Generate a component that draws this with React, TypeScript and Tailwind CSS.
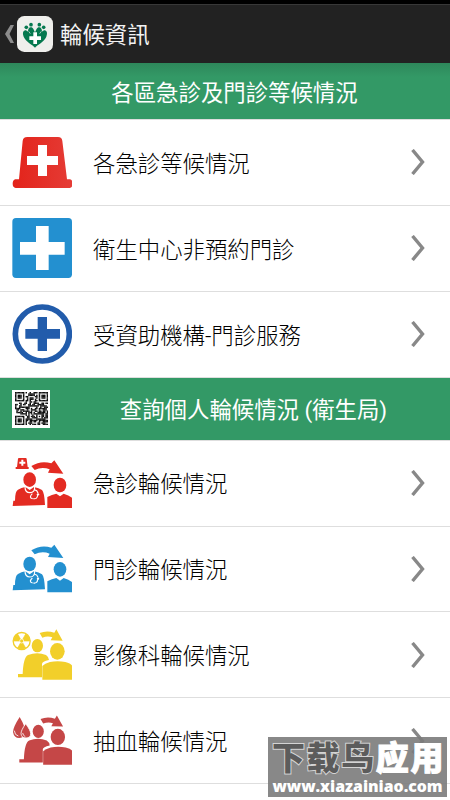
import type { ReactNode } from "react";

const RED = "#e32b22";
const BLUE = "#2390d0";
const NAVY = "#225cab";
const YELLOW = "#f2cf2a";
const CRIMSON = "#c54747";

const QR_SIZE = 25;

// Three finder squares, one alignment square, filler modules elsewhere
function isDark(x: number, y: number) {
  const finders = [
    [0, 0],
    [QR_SIZE - 7, 0],
    [0, QR_SIZE - 7],
  ];
  for (const [fx, fy] of finders) {
    const dx = x - fx;
    const dy = y - fy;
    if (dx >= -1 && dx <= 7 && dy >= -1 && dy <= 7) {
      const ring = Math.max(Math.abs(dx - 3), Math.abs(dy - 3));
      return ring !== 2 && ring !== 4;
    }
  }
  const align = Math.max(Math.abs(x - 18), Math.abs(y - 18));
  if (align <= 2) return align !== 1;
  return Math.sin(x * 1.9 + y * 0.8) + Math.sin(y * 2.3 - x * 0.7) + Math.sin(x * y * 0.6) > -0.25;
}

function QrCode() {
  const modules: ReactNode[] = [];
  for (let y = 0; y < QR_SIZE; y++) {
    for (let x = 0; x < QR_SIZE; x++) {
      if (isDark(x, y)) modules.push(<rect key={`${x}-${y}`} x={x} y={y} width="1.1" height="1.1" />);
    }
  }
  return (
    <div className="size-[38px] shrink-0 bg-white p-[2.5px]">
      <svg viewBox="0 0 25 25" className="size-[33px]" fill="#0c0c0c">
        {modules}
      </svg>
    </div>
  );
}

function AppLogo() {
  return (
    <svg viewBox="0 0 108 108" className="size-9 shrink-0">
      <rect width="108" height="108" rx="22" fill="#efefec" />
      <g fill="#06794f">
        <circle cx="28" cy="34" r="5.5" />
        <circle cx="42" cy="26" r="5.5" />
        <circle cx="67" cy="26" r="5.5" />
        <circle cx="80" cy="34" r="5.5" />
        <path d="M54 95C48 87 26 77 20 62c-4-10-2-18 5-19 3 0 5 2 8 4 0-9 4-14 9-13 6 0 9 8 12 16 3-8 6-16 12-16 5-1 9 4 9 13 3-2 5-4 8-4 7 1 9 9 5 19C82 77 60 87 54 95Z" />
      </g>
      <path d="M49 49h11v12h12v11H60v12H49V72H37V61h12Z" fill="#fff" />
      <path d="M35 46l5 7M73 46l-5 7" stroke="#efefec" strokeWidth="2" />
    </svg>
  );
}

function SirenIcon() {
  return (
    <svg viewBox="36 36 180 180" className="size-[60px]">
      <defs>
        <linearGradient id="siren">
          <stop offset="0" stopColor="#e3231a" />
          <stop offset="1" stopColor="#e53c36" />
        </linearGradient>
      </defs>
      <path d="M82 51h92q12 0 13 12l14 115h9q8 2 8 13t-9 13H47q-9-2-9-13t8-13h11l11-115q1-12 14-12Z" fill="url(#siren)" />
      <path d="M114 75h27v33h33v27h-33v33h-27v-33H81v-27h33Z" fill="#fff" />
    </svg>
  );
}

function SquareCrossIcon() {
  return (
    <svg viewBox="36 36 180 180" className="size-[60px]">
      <rect x="37" y="36" width="179" height="180" rx="11" fill={BLUE} />
      <path d="M108 60h38v48h48v38h-48v46h-38v-46H60v-38h48Z" fill="#fff" />
    </svg>
  );
}

function RoundCrossIcon() {
  return (
    <svg viewBox="36 36 180 180" className="size-[60px]">
      <circle cx="127" cy="126" r="81" fill="none" stroke={NAVY} strokeWidth="17" />
      <path d="M113 75h28v36h39v29h-39v37h-28v-37H76v-29h37Z" fill={NAVY} />
    </svg>
  );
}

function DoctorPatient({ color }: { color: string }) {
  return (
    <>
      <g fill={color}>
        <path d="M94 63Q123 45 154 55l9-9 27 40-46-3 5-10Q126 64 104 75Z" />
        <ellipse cx="89" cy="104" rx="19" ry="22" />
        <path d="M38 183l2-16h5q0-29 9-33 10-6 22-8l13 9 13-9q15 3 24 9 7 6 9 45Z" />
        <ellipse cx="180" cy="120" rx="19" ry="22" />
        <path d="M142 189v-33q14-7 27-10l11 8 11-8q16 4 26 13v30Z" />
      </g>
      {/* stethoscope */}
      <g fill="none" stroke="#fff" strokeWidth="3.5">
        <path d="M75 125q0 18 15 18t14-18M103 134q9 2 11 10" />
        <path d="M97 146q-12 12 1 15M100 161q12 2 13-11" />
      </g>
      <circle cx="114" cy="148" r="3.5" fill="#fff" />
    </>
  );
}

function EmergencyQueueIcon() {
  return (
    <svg viewBox="36 24 180 180" className="size-[60px]">
      <path d="M54 41q0-2 3-2h20q3 0 3 3l3 24h3v6H47v-6h4Z" fill={RED} />
      <path d="M64 44h6v6h6v6h-6v6h-6v-6h-6v-6h6Z" fill="#fff" />
      <DoctorPatient color={RED} />
    </svg>
  );
}

function ClinicQueueIcon() {
  return (
    <svg viewBox="36 27 180 180" className="size-[60px]">
      <g transform="translate(0 -2)">
        <DoctorPatient color={BLUE} />
      </g>
    </svg>
  );
}

function TwoPeople({ color }: { color: string }) {
  return (
    <>
      <path d="M119 54Q140 45 163 53l6-10 19 34-36-1 5-9Q143 62 127 68Z" fill={color} />
      <ellipse cx="112" cy="92" rx="17" ry="20" fill={color} />
      <path d="M54 187v-10h14q2-50 16-57 28-11 54 0 8 5 9 15-21 4-21 12v40Z" fill={color} />
      <ellipse cx="172" cy="109" rx="25" ry="28" fill="#fff" />
      <ellipse cx="172" cy="109" rx="22" ry="25" fill={color} />
      <path d="M127 194v-41q7-8 23-12 23-4 46 0 18 4 21 13v40Z" fill={color} />
    </>
  );
}

function ImagingQueueIcon() {
  return (
    <svg viewBox="36 30 180 180" className="size-[60px]">
      <TwoPeople color={YELLOW} />
      <circle cx="65" cy="78" r="29" fill="#fff" />
      <circle cx="65" cy="78" r="25.5" fill="#fff" stroke={YELLOW} strokeWidth="4" />
      {/* radiation blades */}
      <path
        d="M65 78H41A24 24 0 0 1 53 57.2ZM65 78L77 57.2A24 24 0 0 1 89 78ZM65 78L77 98.8A24 24 0 0 1 53 98.8Z"
        fill={YELLOW}
        stroke={YELLOW}
        strokeWidth="2"
      />
      <circle cx="65" cy="78" r="6" fill={YELLOW} stroke="#fff" strokeWidth="2" />
    </svg>
  );
}

function BloodQueueIcon() {
  return (
    <svg viewBox="36 33 180 180" className="size-[60px]">
      <g transform="translate(5 4) scale(0.98)">
        <TwoPeople color={CRIMSON} />
      </g>
      <path d="M59 51q17 29 16 43-1 20-17 20T39 96q0-14 20-45Z" fill={CRIMSON} />
      <path d="M77 71q15 20 15 30 0 13-14 13T63 101q0-10 14-30Z" fill={CRIMSON} stroke="#fff" strokeWidth="2.5" />
      <path d="M43 92q1 14 12 16M68 99q1 8 8 11" fill="none" stroke="#fff" strokeWidth="2.5" />
    </svg>
  );
}

const waitingItems = [
  { label: "各急診等候情況", icon: <SirenIcon /> },
  { label: "衛生中心非預約門診", icon: <SquareCrossIcon /> },
  { label: "受資助機構-門診服務", icon: <RoundCrossIcon /> },
];

const personalItems = [
  { label: "急診輪候情況", icon: <EmergencyQueueIcon /> },
  { label: "門診輪候情況", icon: <ClinicQueueIcon /> },
  { label: "影像科輪候情況", icon: <ImagingQueueIcon /> },
  { label: "抽血輪候情況", icon: <BloodQueueIcon /> },
];

function Row({ label, icon }: { label: string; icon: ReactNode }) {
  return (
    <li className="flex h-[85.9px] items-center border-b border-[#dedede] pl-3 pr-[25px]">
      {icon}
      <span className="ml-[21px] flex-1 pt-[3px] text-[22.4px] font-light leading-none text-black">{label}</span>
      <svg viewBox="0 0 14 26" className="h-[26px] w-3.5" fill="none" stroke="#888" strokeWidth="3.4">
        <path d="M1.5 1l10 12-10 12" />
      </svg>
    </li>
  );
}

function Watermark() {
  return (
    <div className="absolute left-[268px] top-[737px] flex h-[60px] w-[179px] flex-col items-center overflow-hidden bg-[#7b7b7b]/90 text-white">
      <div className="mt-1.5 flex pl-0.5 text-[33px] font-black leading-[32px] tracking-[1.6px]">
        <span className="text-[#5c5c5c] [-webkit-text-stroke:2px_#d4d4d4] [paint-order:stroke_fill]">下载鸟</span>
        <span className="[-webkit-text-stroke:1px_#fff]">应用</span>
      </div>
      <span className="mt-0.5 font-['Open_Sans',sans-serif] text-[15.8px] font-extrabold leading-[18px]">www.xiazainiao.com</span>
    </div>
  );
}

export default function App() {
  return (
    <div className="relative h-[800px] w-[450px] overflow-hidden bg-white font-[Roboto,'Noto_Sans_CJK_TC',sans-serif]">
      <div className="h-1 bg-black" />
      <header className="flex h-[59px] items-center border-t border-[#383838] bg-[#222] pl-[5px]">
        <svg viewBox="0 0 9 20" className="mr-[3px] h-5 w-[9px] shrink-0" fill="#8c8c8c">
          <path d="M5.5 1H9L4.5 10 9 19H5.5L0 10Z" />
        </svg>
        <AppLogo />
        <h1 className="ml-[7px] pt-0.5 text-[22.4px] leading-none text-[#f3f3f3]">輪候資訊</h1>
      </header>

      <h2 className="flex h-[57px] items-center justify-center border-b border-[#dedede] bg-[#339966] bg-linear-to-b from-[#2e885b] to-[#339966] to-25% pl-[19px] pt-[5px] text-[22.4px] leading-none text-white">
        各區急診及門診等候情況
      </h2>
      <ul>
        {waitingItems.map((item) => (
          <Row key={item.label} {...item} />
        ))}
      </ul>

      <div className="flex h-[63px] items-center border-b border-[#dedede] bg-[#339966] pl-3">
        <QrCode />
        <h2 className="flex-1 pl-[7px] pt-[3px] text-center text-[22.4px] leading-none text-white">查詢個人輪候情況 (衛生局)</h2>
      </div>
      <ul>
        {personalItems.map((item) => (
          <Row key={item.label} {...item} />
        ))}
      </ul>

      <Watermark />
    </div>
  );
}
